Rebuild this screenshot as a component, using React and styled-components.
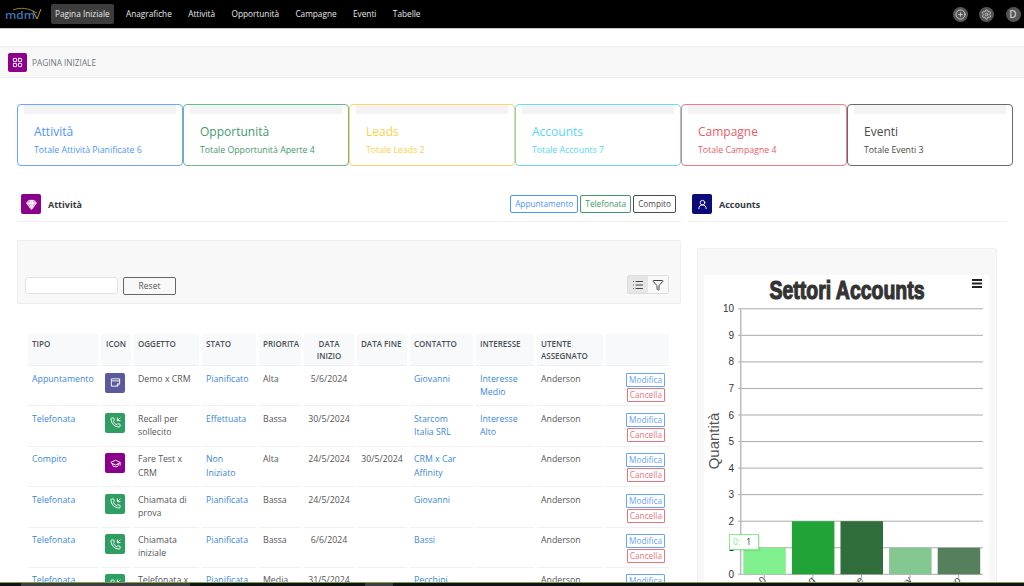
import React from 'react';
import styled, { createGlobalStyle } from 'styled-components';
import { LayoutGrid, Gem, List, Filter, PhoneIncoming, GraduationCap, CirclePlus, Settings, UserRound } from 'lucide-react';

// Icons
const NoteCalendar = ({ size }) => (
	<svg viewBox="0 0 24 24" width={size} height={size} fill="none" stroke="currentColor" strokeWidth="2" strokeLinejoin="round">
		<path d="M3 4h18v11l-5 5H3z" />
		<path d="M3 8.5h18" />
		<path d="M16 20v-5h5" />
	</svg>
);

// Data
const navItems = ['Pagina Iniziale', 'Anagrafiche', 'Attività', 'Opportunità', 'Campagne', 'Eventi', 'Tabelle'];

const summaryCards = [
	{ title: 'Attività', text: 'Totale Attività Pianificate 6', color: '#4d94ff', border: '#6aa5ff' },
	{ title: 'Opportunità', text: 'Totale Opportunità Aperte 4', color: '#3f9a68', border: '#6cb98c' },
	{ title: 'Leads', text: 'Totale Leads 2', color: '#ffcf4a', border: '#ffd566' },
	{ title: 'Accounts', text: 'Totale Accounts 7', color: '#55d5f7', border: '#6cdaf7' },
	{ title: 'Campagne', text: 'Totale Campagne 4', color: '#e85c66', border: '#ec7b83' },
	{ title: 'Eventi', text: 'Totale Eventi 3', color: '#4a4a4a', border: '#6a6a6a' },
];

const columns = [
	{ label: 'TIPO', width: 70 },
	{ label: 'ICON', width: 30, center: true },
	{ label: 'OGGETTO', width: 65 },
	{ label: 'STATO', width: 54 },
	{ label: 'PRIORITA', width: 42 },
	{ label: 'DATA INIZIO', width: 50, center: true },
	{ label: 'DATA FINE', width: 50 },
	{ label: 'CONTATTO', width: 63 },
	{ label: 'INTERESSE', width: 58 },
	{ label: 'UTENTE ASSEGNATO', width: 66 },
	{ label: '', width: 63 },
];

const rows = [
	{ tipo: 'Appuntamento', icon: 'event', oggetto: 'Demo x CRM', stato: 'Pianificato', priorita: 'Alta', inizio: '5/6/2024', fine: '', contatto: 'Giovanni', interesse: 'Interesse Medio' },
	{ tipo: 'Telefonata', icon: 'call', oggetto: 'Recall per sollecito', stato: 'Effettuata', priorita: 'Bassa', inizio: '30/5/2024', fine: '', contatto: 'Starcom Italia SRL', interesse: 'Interesse Alto' },
	{ tipo: 'Compito', icon: 'task', oggetto: 'Fare Test x CRM', stato: 'Non Iniziato', priorita: 'Alta', inizio: '24/5/2024', fine: '30/5/2024', contatto: 'CRM x Car Affinity', interesse: '' },
	{ tipo: 'Telefonata', icon: 'call', oggetto: 'Chiamata di prova', stato: 'Pianificata', priorita: 'Bassa', inizio: '24/5/2024', fine: '', contatto: 'Giovanni', interesse: '' },
	{ tipo: 'Telefonata', icon: 'call', oggetto: 'Chiamata iniziale', stato: 'Pianificata', priorita: 'Bassa', inizio: '6/6/2024', fine: '', contatto: 'Bassi', interesse: '' },
	{ tipo: 'Telefonata', icon: 'call', oggetto: 'Telefonata x', stato: 'Pianificata', priorita: 'Media', inizio: '31/5/2024', fine: '', contatto: 'Pecchini', interesse: '' },
];

const iconTypes = {
	event: { bg: '#5c5a9c', Icon: NoteCalendar },
	call: { bg: '#2f9e63', Icon: PhoneIncoming },
	task: { bg: '#8a008a', Icon: GraduationCap },
};

const bars = [
	{ value: 1, color: '#80f08e', label: '0' },
	{ value: 2, color: '#22a338', label: 'ing' },
	{ value: 2, color: '#2f6d3a', label: 'ne' },
	{ value: 1, color: '#85c790', label: 'ay' },
	{ value: 1, color: '#557f5d', label: 'ico' },
];

// Chart, drawn in its own coordinates
const Chart = () => {
	const ticks = [0, 1, 2, 3, 4, 5, 6, 7, 8, 9, 10];
	const yFor = (value) => 299.3 - value * 26.55;
	const chartFont = "'Liberation Sans', sans-serif";
	return (
		<ChartSvg viewBox="0 0 285 330" width="285" height="330">
			<text x="142" y="24" textAnchor="middle" fontFamily={chartFont} fontWeight="700" fontSize="26" fill="#333" textLength="155" lengthAdjust="spacingAndGlyphs" stroke="#333" strokeWidth="1.2">Settori Accounts</text>
			<path d="M267 5h10M267 8.5h10M267 12h10" stroke="#222" strokeWidth="2" />
			{ticks.map((tick) => (
				<g key={tick}>
					<line x1="33" x2="278" y1={yFor(tick)} y2={yFor(tick)} stroke="#aaa" strokeWidth="1" />
					<text x="29" y={yFor(tick) + 3.5} textAnchor="end" fontFamily={chartFont} fontSize="10" fill="#333">{tick}</text>
				</g>
			))}
			<line x1="35.7" x2="35.7" y1="33" y2="300" stroke="#bbb" strokeWidth="1.5" />
			<text transform="translate(14 166) rotate(-90)" textAnchor="middle" fontFamily={chartFont} fontSize="15" fill="#555">Quantità</text>
			{bars.map((bar, i) => {
				const left = 38.3 + i * 48.6;
				return (
					<g key={bar.label}>
						<rect x={left} y={yFor(bar.value)} width="42.5" height={bar.value * 26.55} fill={bar.color} />
						<line x1={left + 21} x2={left + 21} y1="300" y2="303" stroke="#aaa" />
						<text transform={`translate(${left + 23.5} 305.5) rotate(-45)`} textAnchor="end" fontFamily={chartFont} fontSize="10" fill="#444">{bar.label}</text>
					</g>
				);
			})}
		</ChartSvg>
	);
};

// Component
const App = () => {
	return (
		<Page>
			<GlobalStyle />
			<TopBar>
				<Logo viewBox="0 0 40 14" width="40" height="14">
					<path d="M9 3c8-3 15-2 24 3" fill="none" stroke="#c9a227" strokeWidth="0.8" />
					<text x="1" y="12" fontFamily="'Open Sans', sans-serif" fontSize="11" fontWeight="600" fill="#3f74b5" textLength="30" lengthAdjust="spacingAndGlyphs">mdm</text>
					<path d="M29 4l4 8 4-10" fill="none" stroke="#b99b3b" strokeWidth="1" />
				</Logo>
				<NavList>
					{navItems.map((item, i) => <NavItem key={item} $active={i === 0}>{item}</NavItem>)}
				</NavList>
				<TopActions>
					<RoundButton><CirclePlus size={11} /></RoundButton>
					<RoundButton><Settings size={11} /></RoundButton>
					<RoundButton>D</RoundButton>
				</TopActions>
			</TopBar>

			<PageHeader>
				<IconTile $bg="#8a008a" $size={19}><LayoutGrid size={11} /></IconTile>
				<PageTitle>PAGINA INIZIALE</PageTitle>
			</PageHeader>

			<Cards>
				{summaryCards.map((card) => (
					<Card key={card.title} $color={card.color} $border={card.border}>
						<CardStrip />
						<CardTitle>{card.title}</CardTitle>
						<CardText>{card.text}</CardText>
					</Card>
				))}
			</Cards>

			<Columns>
				<MainColumn>
					<SectionHead>
						<IconTile $bg="#8a008a" $size={20}><Gem size={11} fill="rgba(255,255,255,0.55)" /></IconTile>
						<SectionTitle>Attività</SectionTitle>
						<SectionButtons>
							<OutlineButton $color="#4d94ff">Appuntamento</OutlineButton>
							<OutlineButton $color="#3f9a68">Telefonata</OutlineButton>
							<OutlineButton $color="#4a4a4a">Compito</OutlineButton>
						</SectionButtons>
					</SectionHead>

					<FilterPanel>
						<SearchInput />
						<ResetButton>Reset</ResetButton>
						<ViewToggle>
							<ToggleButton $active><List size={12} /></ToggleButton>
							<ToggleButton><Filter size={12} /></ToggleButton>
						</ViewToggle>
					</FilterPanel>

					<Table>
						<thead>
							<tr>
								{columns.map((col) => <Th key={col.label} $width={col.width} $center={col.center}>{col.label}</Th>)}
							</tr>
						</thead>
						<tbody>
							{rows.map((row, i) => {
								const { bg, Icon } = iconTypes[row.icon];
								return (
									<tr key={i}>
										<Td><TextLink>{row.tipo}</TextLink></Td>
										<Td><IconTile $bg={bg} $size={20}><Icon size={11} /></IconTile></Td>
										<Td>{row.oggetto}</Td>
										<Td><TextLink>{row.stato}</TextLink></Td>
										<Td>{row.priorita}</Td>
										<Td $center>{row.inizio}</Td>
										<Td $center>{row.fine}</Td>
										<Td><TextLink>{row.contatto}</TextLink></Td>
										<Td><TextLink>{row.interesse}</TextLink></Td>
										<Td>Anderson</Td>
										<Td>
											<RowActions>
												<SmallButton $color="#4d94ff">Modifica</SmallButton>
												<SmallButton $color="#e85c66">Cancella</SmallButton>
											</RowActions>
										</Td>
									</tr>
								);
							})}
						</tbody>
					</Table>
				</MainColumn>

				<SideColumn>
					<SectionHead>
						<IconTile $bg="#0b0b7a" $size={20}><UserRound size={11} /></IconTile>
						<SectionTitle>Accounts</SectionTitle>
					</SectionHead>
					<ChartPanel>
						<ChartArea>
							<Chart />
							<ChartTooltip><b>0:</b> 1</ChartTooltip>
						</ChartArea>
					</ChartPanel>
				</SideColumn>
			</Columns>

			<BottomBar>
				<ScrollThumb $left={21} $width={169} />
				<ScrollThumb $left={175} $width={28} />
			</BottomBar>
		</Page>
	);
};

// Styled
const GlobalStyle = createGlobalStyle`
	html, body {
		margin: 0;
		height: 100%;
		overflow: hidden;
		background: #fff;
	}
	body {
		font-family: 'Open Sans', 'Noto Sans', sans-serif;
		font-size: 9px;
		color: #495057;
	}
`;

const Page = styled.div`
	position: relative;
	width: 1024px;
	height: 586px;
	overflow: hidden;
`;

const TopBar = styled.header`
	display: flex;
	align-items: center;
	height: 28px;
	padding: 0 3.5px 0 4px;
	background: #000;
	border-bottom: 1px solid #c9c9c9;
`;

const Logo = styled.svg`
	flex: none;
	margin-right: 7px;
`;

const NavList = styled.nav`
	display: flex;
	align-items: center;
	gap: 8.4px;
`;

const NavItem = styled.span`
	padding: 4px 4px 5px 4px;
	border-radius: 2px;
	background: ${({ $active }) => ($active ? '#3d3d3d' : 'transparent')};
	color: #e8e8e8;
	font-size: 8.25px;
	line-height: 11px;
`;

const TopActions = styled.div`
	display: flex;
	gap: 11.5px;
	margin-left: auto;
`;

const RoundButton = styled.span`
	display: flex;
	align-items: center;
	justify-content: center;
	width: 15px;
	height: 15px;
	border-radius: 50%;
	background: #555;
	color: #ccc;
	font-size: 10px;
	font-weight: 600;
`;

const PageHeader = styled.div`
	display: flex;
	align-items: center;
	gap: 5px;
	height: 32px;
	margin-top: 17px;
	padding: 0 8px;
	background: #f8f8f8;
	border-top: 1px solid #efefef;
	border-bottom: 1px solid #efefef;
	box-sizing: border-box;
`;

const IconTile = styled.span`
	display: inline-flex;
	align-items: center;
	justify-content: center;
	flex: none;
	width: ${({ $size }) => $size}px;
	height: ${({ $size }) => $size}px;
	border-radius: 2px;
	background: ${({ $bg }) => $bg};
	color: #fff;
`;

const PageTitle = styled.span`
	color: #6c757d;
	font-size: 8.25px;
`;

const Cards = styled.section`
	display: grid;
	grid-template-columns: repeat(6, 1fr);
	margin: 26px 11px 0 17px;
`;

const Card = styled.div`
	height: 62px;
	padding: 0 6px;
	border: 1px solid ${({ $border }) => $border};
	border-radius: 4px;
	box-sizing: border-box;
	color: ${({ $color }) => $color};
`;

const CardStrip = styled.div`
	height: 9px;
	background: #f3f3f3;
`;

const CardTitle = styled.div`
	margin: 10px 0 0 10px;
	font-size: 12px;
	line-height: 16px;
`;

const CardText = styled.div`
	margin: 4px 0 0 10px;
	font-size: 8.75px;
	line-height: 12px;
`;

const Columns = styled.div`
	display: flex;
	margin-top: 24px;
	padding-left: 17px;
`;

const MainColumn = styled.div`
	flex: none;
	width: 664px;
`;

const SideColumn = styled.div`
	flex: none;
	width: 318px;
	margin-left: 7px;
`;

const SectionHead = styled.div`
	display: flex;
	align-items: center;
	gap: 7px;
	padding: 4px 5px 7px 4px;
	border-bottom: 1px solid #eeeeee;
`;

const SectionTitle = styled.span`
	color: #343a40;
	font-size: 9px;
	font-weight: 700;
`;

const SectionButtons = styled.div`
	display: flex;
	gap: 2px;
	margin-left: auto;
`;

const OutlineButton = styled.span`
	padding: 3px 4px;
	border: 1px solid ${({ $color }) => $color};
	border-radius: 2px;
	color: ${({ $color }) => $color};
	font-size: 8.25px;
	line-height: 10px;
`;

const FilterPanel = styled.div`
	display: flex;
	align-items: flex-end;
	gap: 5px;
	height: 64px;
	margin-top: 18px;
	padding: 0 11px 8px 7px;
	background: #f8f8f8;
	border: 1px solid #eeeeee;
	border-radius: 2px;
	box-sizing: border-box;
`;

const SearchInput = styled.div`
	width: 93px;
	height: 17px;
	margin-bottom: 1px;
	background: #fff;
	border: 1px solid #e3e3e3;
	border-radius: 3px;
	box-sizing: border-box;
`;

const ResetButton = styled.span`
	width: 53px;
	height: 18px;
	border: 1px solid #666;
	border-radius: 2px;
	box-sizing: border-box;
	color: #555;
	font-size: 8.5px;
	line-height: 16px;
	text-align: center;
`;

const ViewToggle = styled.div`
	display: flex;
	margin-left: auto;
	margin-bottom: 1px;
	border: 1px solid #ddd;
	border-radius: 2px;
`;

const ToggleButton = styled.span`
	display: flex;
	align-items: center;
	justify-content: center;
	width: 20px;
	height: 17px;
	background: ${({ $active }) => ($active ? '#e6e6e6' : '#f8f8f8')};
	color: #444;
`;

const Table = styled.table`
	width: 647px;
	margin: 30px 0 0 8px;
	table-layout: fixed;
	border-collapse: separate;
	border-spacing: 3px 0;
`;

const Th = styled.th`
	width: ${({ $width }) => $width}px;
	height: 32px;
	padding: 4px 4px 2px 4px;
	box-sizing: border-box;
	vertical-align: top;
	background: #f8f9fa;
	border-bottom: 1px solid #eef0f4;
	color: #495057;
	font-size: 8px;
	font-weight: 600;
	line-height: 11.6px;
	text-align: ${({ $center }) => ($center ? 'center' : 'left')};
`;

const Td = styled.td`
	height: 40.4px;
	padding: 6.5px 4px 0 4px;
	box-sizing: border-box;
	vertical-align: top;
	border-bottom: 1px solid #eef0f4;
	color: #555;
	font-size: 8.75px;
	line-height: 13.4px;
	text-align: ${({ $center }) => ($center ? 'center' : 'left')};
`;

const TextLink = styled.span`
	color: #3a87d8;
`;

const RowActions = styled.div`
	display: flex;
	flex-direction: column;
	align-items: flex-end;
	gap: 1px;
`;

const SmallButton = styled.span`
	height: 14px;
	padding: 0 2px;
	border: 1px solid ${({ $color }) => $color};
	border-radius: 1px;
	box-sizing: border-box;
	color: ${({ $color }) => $color};
	font-size: 8.25px;
	line-height: 12px;
	text-align: center;
	opacity: 0.85;
`;

const ChartPanel = styled.div`
	width: 300px;
	height: 400px;
	margin: 26px 0 0 9px;
	padding: 26px 8px 0 6px;
	background: #f8f8f8;
	border: 1px solid #f0f0f0;
	border-radius: 3px;
	box-sizing: border-box;
`;

const ChartArea = styled.div`
	position: relative;
	width: 285px;
	height: 330px;
	background: #fff;
`;

const ChartSvg = styled.svg`
	display: block;
	margin-left: 1px;
`;

const ChartTooltip = styled.span`
	position: absolute;
	left: 25px;
	top: 259px;
	width: 30px;
	height: 16px;
	padding-left: 3px;
	background: #fff;
	border: 1px solid #80f08e;
	box-sizing: border-box;
	box-shadow: 1px 1px 1px rgba(0, 0, 0, 0.08);
	color: #333;
	font-size: 8.5px;
	line-height: 14px;
	b {
		color: #80f08e;
		font-weight: 400;
		margin-right: 4px;
	}
`;

const BottomBar = styled.div`
	position: absolute;
	left: 0;
	right: 0;
	bottom: 0;
	display: flex;
	height: 3px;
	background: #111;
	border-top: 1px solid #7da04c;
`;

const ScrollThumb = styled.div`
	width: ${({ $width }) => $width}px;
	margin-left: ${({ $left }) => $left}px;
	background: #3d3d3d;
`;

// Export
export default App;
